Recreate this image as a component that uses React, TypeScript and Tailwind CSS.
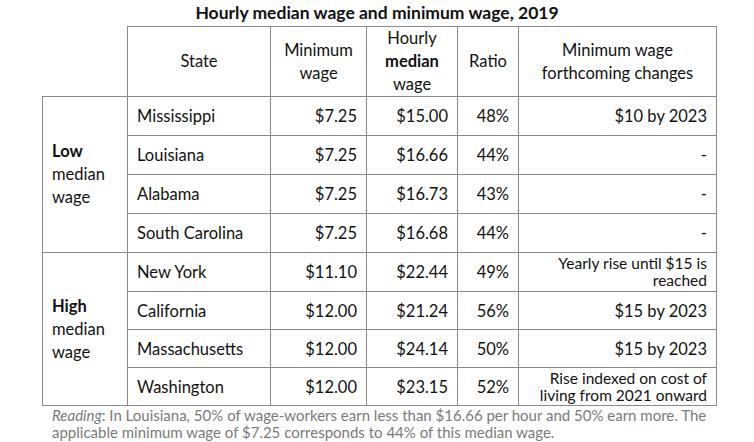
const rows = [
  { state: 'Mississippi', min: '$7.25', median: '$15.00', ratio: '48%', change: ['$10 by 2023'] },
  { state: 'Louisiana', min: '$7.25', median: '$16.66', ratio: '44%', change: ['-'] },
  { state: 'Alabama', min: '$7.25', median: '$16.73', ratio: '43%', change: ['-'] },
  { state: 'South Carolina', min: '$7.25', median: '$16.68', ratio: '44%', change: ['-'] },
  { state: 'New York', min: '$11.10', median: '$22.44', ratio: '49%', change: ['Yearly rise until $15 is', 'reached'] },
  { state: 'California', min: '$12.00', median: '$21.24', ratio: '56%', change: ['$15 by 2023'] },
  { state: 'Massachusetts', min: '$12.00', median: '$24.14', ratio: '50%', change: ['$15 by 2023'] },
  { state: 'Washington', min: '$12.00', median: '$23.15', ratio: '52%', change: ['Rise indexed on cost of', 'living from 2021 onward'] },
];

const cell = 'border border-[#8a8a8a] px-[9px] align-middle';

export default function App() {
  return (
    <div className="w-[754px] h-[442px] bg-white text-[#111] font-['Lato','Noto_Sans',sans-serif]">
      <div className="h-[26px] flex items-center justify-center text-[17.5px] font-bold">
        Hourly median wage and minimum wage, 2019
      </div>
      <table className="ml-[42px] w-[674px] border-collapse table-fixed text-[16.5px] leading-[18px]">
        <colgroup>
          <col className="w-[85px]" />
          <col className="w-[143px]" />
          <col className="w-[96px]" />
          <col className="w-[91px]" />
          <col className="w-[61px]" />
          <col className="w-[198px]" />
        </colgroup>
        <thead>
          <tr className="h-[69px] leading-[23px] text-center">
            <th className="font-normal" />
            <th className={`${cell} font-normal`}>State</th>
            <th className={`${cell} font-normal`}>Minimum<br />wage</th>
            <th className={`${cell} font-normal`}>Hourly<br /><b className="font-bold">median</b><br />wage</th>
            <th className={`${cell} font-normal`}>Ratio</th>
            <th className={`${cell} font-normal`}>Minimum wage<br />forthcoming changes</th>
          </tr>
        </thead>
        <tbody>
          {rows.map((r, i) => (
            <tr key={r.state} className={i < 5 ? 'h-[39px]' : 'h-[38px]'}>
              {i % 4 === 0 && (
                <td rowSpan={4} className={`${cell} leading-[23px]`}>
                  <b className="font-bold">{i === 0 ? 'Low' : 'High'}</b>
                  <br />median
                  <br />wage
                </td>
              )}
              <td className={cell}>{r.state}</td>
              <td className={`${cell} text-right`}>{r.min}</td>
              <td className={`${cell} text-right`}>{r.median}</td>
              <td className={`${cell} text-right`}>{r.ratio}</td>
              <td
                className={`${cell} text-right ${r.change.length > 1 ? 'text-[15.5px] leading-[17px]' : ''}`}
              >
                {r.change.map((c, j) => (
                  <div key={j}>{c}</div>
                ))}
              </td>
            </tr>
          ))}
        </tbody>
      </table>
      <p className="ml-[52px] mt-[1px] text-[15px] leading-[17px] text-[#7a7a7a] whitespace-nowrap">
        <i>Reading</i>: In Louisiana, 50% of wage-workers earn less than $16.66 per hour and 50% earn more. The
        <br />
        applicable minimum wage of $7.25 corresponds to 44% of this median wage.
      </p>
    </div>
  );
}
